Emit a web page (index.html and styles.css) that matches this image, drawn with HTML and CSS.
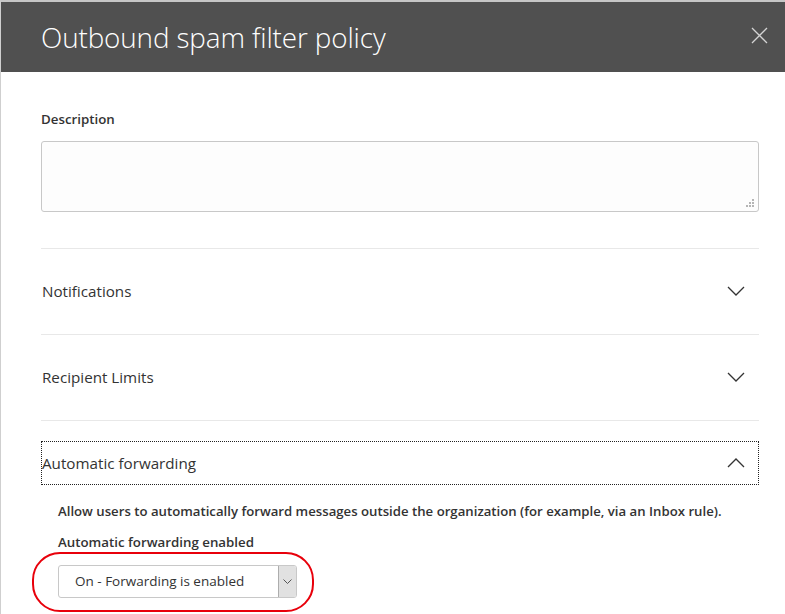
FILE: index.html
```html
<!DOCTYPE html>
<html>
<head>
<meta charset="utf-8">
<link rel="stylesheet" href="styles.css">
</head>
<body>
<div class="panel">
  <header class="header">
    <h1 class="title">Outbound spam filter policy</h1>
    <svg class="close" width="17" height="17" viewBox="0 0 17 17"><path d="M1 1L16 16M16 1L1 16" stroke="#d4d4d4" stroke-width="1.3" fill="none"/></svg>
  </header>
  <main class="content">
    <label class="label desc-label">Description</label>
    <div class="textarea-wrap">
      <textarea class="textarea"></textarea>
      <svg class="grip" width="9" height="9" viewBox="0 0 9 9"><g fill="#b5b5b5"><rect x="6" y="0" width="2" height="2"/><rect x="3" y="3" width="2" height="2"/><rect x="6" y="3" width="2" height="2"/><rect x="0" y="6" width="2" height="2"/><rect x="3" y="6" width="2" height="2"/><rect x="6" y="6" width="2" height="2"/></g></svg>
    </div>
    <section class="section">
      <div class="sec-head"><span>Notifications</span><svg class="chev" width="18" height="10" viewBox="0 0 18 10"><path d="M1 1L9 9L17 1" stroke="#333" stroke-width="1.3" fill="none"/></svg></div>
    </section>
    <section class="section">
      <div class="sec-head"><span>Recipient Limits</span><svg class="chev" width="18" height="10" viewBox="0 0 18 10"><path d="M1 1L9 9L17 1" stroke="#333" stroke-width="1.3" fill="none"/></svg></div>
    </section>
    <section class="section open">
      <div class="sec-head focused"><span>Automatic forwarding</span><svg class="chev" width="18" height="10" viewBox="0 0 18 10"><path d="M1 9L9 1L17 9" stroke="#333" stroke-width="1.3" fill="none"/></svg></div>
      <div class="sec-body">
        <p class="info">Allow users to automatically forward messages outside the organization (for example, via an Inbox rule).</p>
        <p class="label field-label">Automatic forwarding enabled</p>
        <div class="highlight">
          <div class="select">
            <span class="select-text">On - Forwarding is enabled</span>
            <span class="select-btn"><svg width="9" height="5" viewBox="0 0 9 5"><path d="M0.5 0.5L4.5 4.5L8.5 0.5" stroke="#555" stroke-width="1" fill="none"/></svg></span>
          </div>
        </div>
      </div>
    </section>
  </main>
</div>
</body>
</html>
```

FILE: styles.css
```css
* { box-sizing: border-box; }
html, body { margin: 0; padding: 0; background: #fff; }
body {
  font-family: "Open Sans", "Liberation Sans", sans-serif;
  color: #333;
  overflow: hidden;
}
.panel {
  border-top: 2px solid #c6c6c6;
  border-left: 1px solid #cfcfcf;
  height: 614px;
}
.header {
  background: #505050;
  height: 70px;
  display: flex;
  align-items: center;
  justify-content: space-between;
  padding: 0 17px 0 40px;
}
.title {
  margin: 0;
  font-weight: 300;
  font-size: 27.8px;
  color: #fff;
  letter-spacing: -0.1px;
}
.close { display: block; margin-top: -3px; }
.content {
  padding: 0 26px 0 40px;
}
.label {
  font-weight: 600;
  font-size: 13.3px;
  color: #333;
}
.desc-label {
  display: block;
  margin-top: 38px;
  line-height: 18px;
}
.textarea-wrap {
  position: relative;
  margin-top: 13px;
  height: 71px;
}
.textarea {
  display: block;
  width: 100%;
  height: 71px;
  border: 1px solid #c8c8c8;
  border-radius: 3px;
  background: #fdfdfd;
  resize: none;
  outline: none;
  margin: 0;
}
.grip { position: absolute; right: 4px; bottom: 4px; }
.section {
  border-top: 1px solid #e8e8e8;
  margin-top: 36px;
  padding: 20px 0 0;
}
.section + .section { margin-top: 0; }
.sec-head {
  height: 44px;
  display: flex;
  align-items: center;
  justify-content: space-between;
  padding: 0 14px 0 1px;
  font-size: 15.2px;
  color: #333;
  margin-bottom: 21px;
}
.sec-head.focused {
  border: 1px dotted #222;
  padding-left: 0;
  padding-right: 13px;
  margin-bottom: 0;
}
.chev { display: block; }
.sec-body { padding-left: 17px; }
.info {
  margin: 17px 0 0;
  font-weight: 600;
  font-size: 13.2px;
  line-height: 18px;
}
.field-label {
  margin: 13px 0 0;
  line-height: 18px;
}
.highlight {
  margin: 1px 0 0 -26px;
  width: 282px;
  height: 60px;
  border: 2.5px solid #e8000b;
  border-radius: 28px;
  padding: 10.5px 0 0 24px;
}
.select {
  width: 239px;
  height: 33px;
  border: 1px solid #c8c8c8;
  border-radius: 3px;
  display: flex;
  align-items: stretch;
  justify-content: space-between;
  background: #fff;
}
.select-text {
  display: flex;
  align-items: center;
  padding-left: 16px;
  font-size: 13.5px;
  color: #333;
}
.select-btn {
  width: 18px;
  background: #e1e1e1;
  border-left: 1px solid #adadad;
  display: flex;
  align-items: center;
  justify-content: center;
  border-radius: 0 2px 2px 0;
}
```
